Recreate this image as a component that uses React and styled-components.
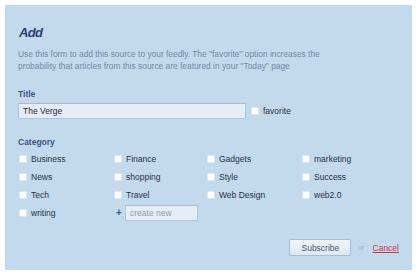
import React, { useState } from "react"
import styled, { createGlobalStyle } from "styled-components"

const CATEGORIES = [
  "Business", "Finance", "Gadgets", "marketing",
  "News", "shopping", "Style", "Success",
  "Tech", "Travel", "Web Design", "web2.0",
  "writing",
]

const GlobalStyle = createGlobalStyle`
  body {
    margin: 0;
    background: #ffffff;
    font-family: "Liberation Sans", Arial, sans-serif;
  }
`

const AddSource = () => {
  const [title, setTitle] = useState("The Verge")
  const [checked, setChecked] = useState({})

  const toggle = name => setChecked(c => ({ ...c, [name]: !c[name] }))

  return (
    <Panel>
      <GlobalStyle />
      <Heading>Add</Heading>
      <Intro>
        Use this form to add this source to your feedly. The "favorite" option increases the
        <br />
        probability that articles from this source are featured in your "Today" page
      </Intro>

      <Label>Title</Label>
      <TitleRow>
        <TextInput
          value={title}
          onChange={({ target: { value } }) => setTitle(value)}
          width="228px"
        />
        <Option>
          <Box type="checkbox" checked={!!checked.favorite} onChange={() => toggle("favorite")} />
          <span>favorite</span>
        </Option>
      </TitleRow>

      <Label $gap="17px">Category</Label>
      <Grid>
        {CATEGORIES.map(name => (
          <Option key={name}>
            <Box type="checkbox" checked={!!checked[name]} onChange={() => toggle(name)} />
            <span>{name}</span>
          </Option>
        ))}
        <NewCategory>
          <Plus>+</Plus>
          <TextInput placeholder="create new" width="73px" />
        </NewCategory>
      </Grid>

      <Footer>
        <SubscribeButton type="button">Subscribe</SubscribeButton>
        <Or>or</Or>
        <CancelLink href="#">Cancel</CancelLink>
      </Footer>
    </Panel>
  )
}

const Panel = styled.section`
  box-sizing: border-box;
  margin: 5px 0 0 5px;
  width: 407px;
  height: 265px;
  padding: 20px 13px 0 13px;
  background: #c3d9ec;
  display: flex;
  flex-direction: column;
`

const Heading = styled.h2`
  margin: 0 0 0 1px;
  font-size: 13px;
  line-height: 16px;
  font-weight: bold;
  font-style: italic;
  letter-spacing: -0.7px;
  color: #2c3f72;
`

const Intro = styled.p`
  margin: 7px 0 0;
  font-size: 8.4px;
  line-height: 12px;
  color: #7489a4;
`

const Label = styled.div`
  margin-top: ${p => p.$gap || "16px"};
  font-size: 8.5px;
  line-height: 12px;
  font-weight: bold;
  color: #3b5683;
`

const TitleRow = styled.div`
  margin-top: 3px;
  display: flex;
  align-items: center;
  gap: 5px;
`

const TextInput = styled.input`
  box-sizing: border-box;
  width: ${p => p.width};
  height: 16px;
  padding: 0 4px;
  border: 1px solid #b3c6d9;
  border-top-color: #a6bad0;
  background: #e5eef7;
  font-family: "Liberation Sans", Arial, sans-serif;
  font-size: 8.5px;
  color: #1f2a38;
  outline: none;

  &::placeholder {
    color: #8b9bae;
  }
`

const Grid = styled.div`
  margin: 2px 0 0 1px;
  display: grid;
  grid-template-columns: 95px 93px 95px auto;
  grid-auto-rows: 18px;
`

const Option = styled.label`
  display: flex;
  align-items: center;
  gap: 4px;
  font-size: 8.5px;
  color: #263244;
  cursor: pointer;
`

const Box = styled.input`
  appearance: none;
  box-sizing: border-box;
  margin: 0;
  width: 8px;
  height: 8px;
  background: #fdfeff;
  border: 1px solid #dfe8f1;
  border-radius: 1px;

  &:checked {
    background: #3b6fb6;
  }
`

const NewCategory = styled.div`
  display: flex;
  align-items: center;
  gap: 3px;
  margin-left: 2px;
`

const Plus = styled.span`
  width: 6px;
  font-size: 10px;
  font-weight: bold;
  color: #3d5f98;
  line-height: 1;
`

const Footer = styled.div`
  margin-top: 17px;
  display: flex;
  justify-content: flex-end;
  align-items: center;
`

const SubscribeButton = styled.button`
  box-sizing: border-box;
  width: 62px;
  height: 17px;
  padding: 0;
  border: 1px solid #a9bdd2;
  border-radius: 2px;
  background: linear-gradient(#f1f5fa, #dde7f1);
  font-family: "Liberation Sans", Arial, sans-serif;
  font-size: 8.5px;
  color: #4b5a70;
`

const Or = styled.span`
  margin: 0 8px 0 6px;
  font-size: 8px;
  color: #a2b3c5;
`

const CancelLink = styled.a`
  font-size: 8.5px;
  color: #d2363b;
  text-decoration: underline;
`

export default AddSource
